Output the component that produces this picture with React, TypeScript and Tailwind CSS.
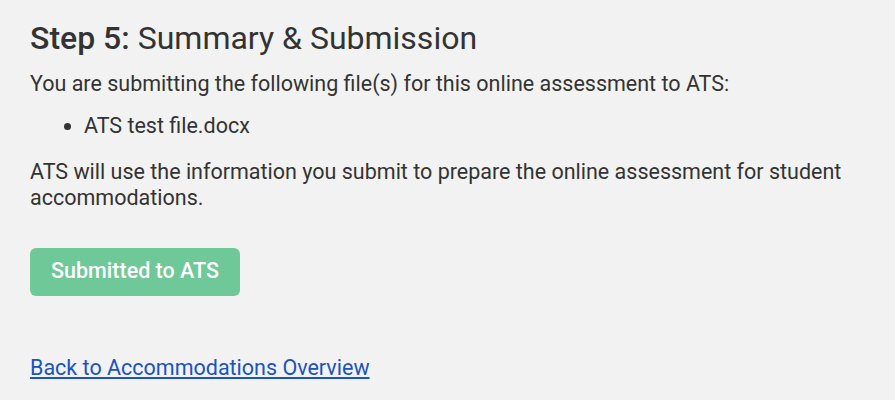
export default function App() {
  return (
    <div
      className="min-h-[400px] w-full bg-[#f2f2f2] pl-[30px] pr-[40px] pt-[19px] text-[#333333]"
      style={{ fontFamily: 'Roboto, "Liberation Sans", sans-serif' }}
    >
      <h2 className="text-[32px] leading-[38px]">
        <span className="font-medium">Step 5:</span> Summary &amp; Submission
      </h2>
      <p className="mt-[14px] text-[21.5px] leading-[26px]">
        You are submitting the following file(s) for this online assessment to ATS:
      </p>
      <ul className="mt-[16px] list-disc pl-[54px] text-[21.5px] leading-[26px]">
        <li>ATS test file.docx</li>
      </ul>
      <p className="mt-[19.5px] text-[21.5px] leading-[26px]">
        ATS will use the information you submit to prepare the online assessment for student
        accommodations.
      </p>
      <button className="mt-[37px] h-[48px] w-[210px] rounded-[6px] bg-[#6fc897] text-[21.5px] font-medium text-white">
        Submitted to ATS
      </button>
      <div className="mt-[59.5px] leading-[26px]">
        <a href="#" className="text-[21.5px] text-[#1a53c2] underline">
          Back to Accommodations Overview
        </a>
      </div>
    </div>
  );
}
